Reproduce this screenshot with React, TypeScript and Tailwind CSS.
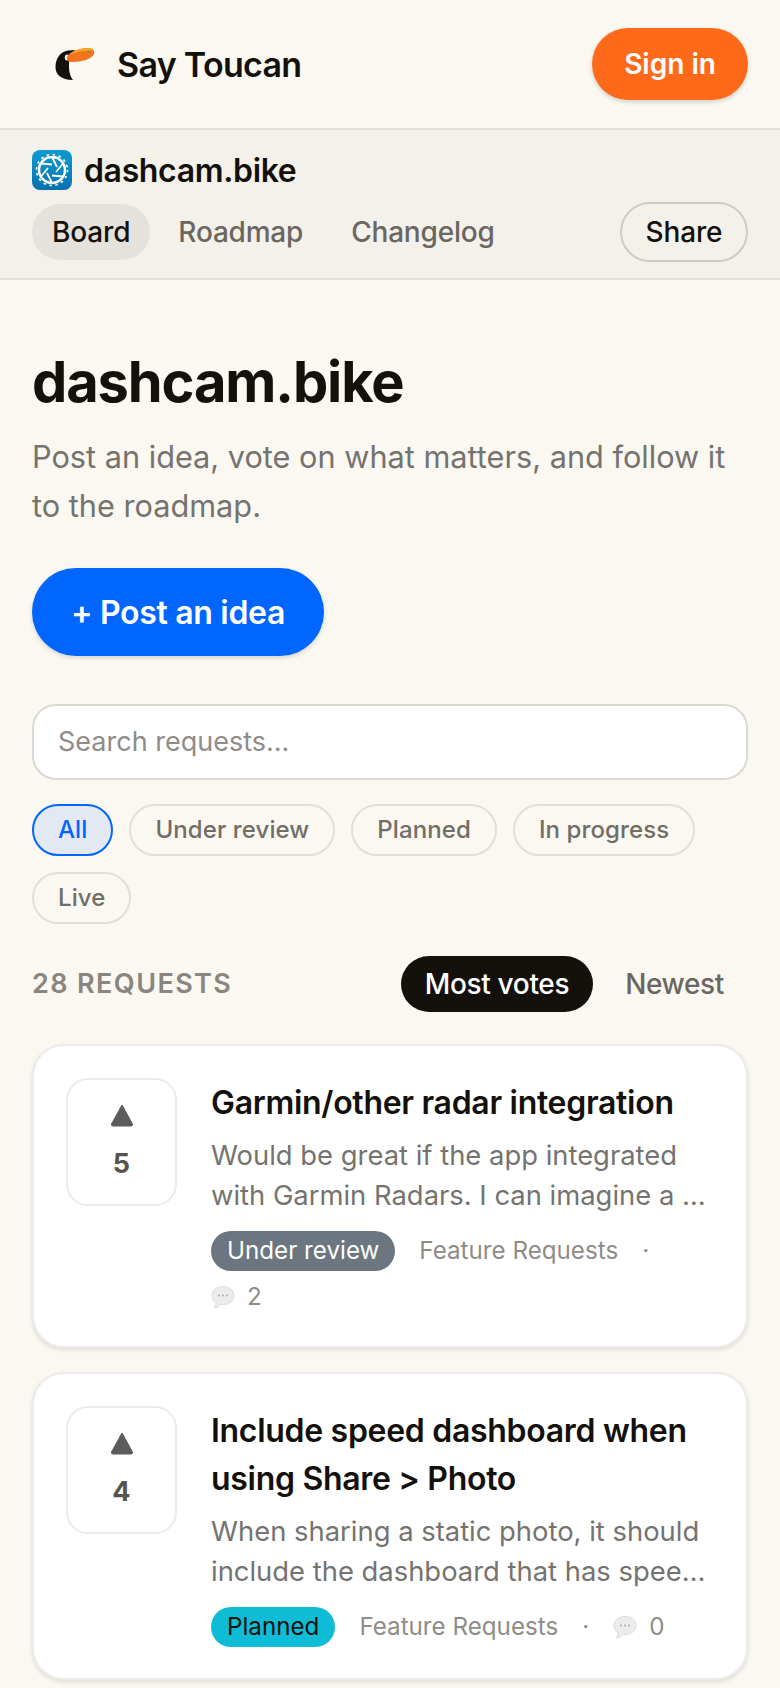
const FILTERS = [
  { label: "All", active: true },
  { label: "Under review" },
  { label: "Planned" },
  { label: "In progress" },
  { label: "Live" },
]

function ToucanLogo() {
  return (
    <svg width="40" height="33" viewBox="0 0 40 33" className="shrink-0">
      <path d="M13 2.500 C5 3.500 0.500 11 0.500 19 C0.500 26.500 6 32 18 32 C15.500 29 14 24 14 19 C14 15 14 12 15.500 9 L20 2 Z" fill="#14110d" />
      <ellipse cx="12" cy="9.500" rx="2.200" ry="3" fill="#ffffff" />
      <path d="M12 9 C14 4 24 0 33 0 C38 0 40 3 39 6 C37 11 26 14 18 14 C13 14 11 12 12 9 Z" fill="#f4731c" />
      <path d="M14.500 6 C19 2.500 26 0 33 0 C35.500 0 37.500 1 38.500 2.500 C30 2.500 22 3.500 14.500 6 Z" fill="#f9a825" />
      <path d="M30 3 L36 2.800 L35 5 Z" fill="#7a9a2e" />
    </svg>
  )
}

function ProjectLogo() {
  return (
    <div className="w-10 h-10 rounded-lg bg-gradient-to-b from-[#0d9bd0] to-[#0a72ad] flex items-center justify-center shrink-0">
      <svg width="36" height="36" viewBox="0 0 36 36" fill="none" stroke="#ffffff">
        <circle cx="18" cy="18" r="15.500" strokeWidth="1.600" strokeDasharray="2.500 3.600" />
        <circle cx="18" cy="18" r="13" strokeWidth="2.500" />
        <g strokeWidth="1.800">
          <path d="M18 5 L23 15" />
          <path d="M29 11.500 L22 20" />
          <path d="M29 24.500 L18 23.500" />
          <path d="M18 31 L13 21" />
          <path d="M7 24.500 L14 16" />
          <path d="M7 11.500 L18 12.500" />
        </g>
      </svg>
    </div>
  )
}

function CommentIcon() {
  return (
    <svg width="24" height="24" viewBox="0 0 24 24" className="shrink-0">
      <path d="M12 1.500 C5.500 1.500 1 5.500 1 10.500 C1 13.500 2.600 16 5 17.600 C5 19.500 4.200 21.500 3 23 C6 22.800 8.500 21.500 10 19.500 C10.700 19.600 11.300 19.600 12 19.600 C18.500 19.600 23 15.500 23 10.500 C23 5.500 18.500 1.500 12 1.500 Z" fill="#ececea" stroke="#dcdcda" strokeWidth="1" />
      <circle cx="8" cy="10.500" r="0.900" fill="#a3a3a0" />
      <circle cx="12" cy="10.500" r="0.900" fill="#a3a3a0" />
      <circle cx="16" cy="10.500" r="0.900" fill="#a3a3a0" />
    </svg>
  )
}

function VoteBox({ count }: { count: number }) {
  return (
    <div className="w-[111px] h-[128px] shrink-0 rounded-[22px] border-2 border-[#ebebe9] bg-white flex flex-col items-center justify-center">
      <svg width="24" height="24" viewBox="0 0 24 24" className="mb-5">
        <path d="M12 2 L22.500 21 Q23 23 21 23 L3 23 Q1 23 1.500 21 Z" fill="#5c5c5a" stroke="#5c5c5a" strokeLinejoin="round" />
      </svg>
      <span className="text-[27px] leading-[34px] font-bold text-[#57534e]">{count}</span>
    </div>
  )
}

function RequestCard({ votes, title, body, status, statusClass, comments }: {
  votes: number
  title: string
  body: string
  status: string
  statusClass: string
  comments: number
}) {
  return (
    <div className="rounded-[32px] border-2 border-[#ebebe9] bg-white shadow-[0_2px_4px_rgba(20,17,13,0.12)] px-8 pt-8 pb-[31px] flex gap-[34px]">
      <VoteBox count={votes} />
      <div className="flex-1 min-w-0 pt-[1px]">
        <h3 className="text-[32px] leading-[48px] font-semibold text-[#14110d] tracking-[-0.3px]">{title}</h3>
        <p className="mt-2 text-[27.4px] leading-[40px] text-[#75736f]">{body}</p>
        <div className="mt-4 flex flex-wrap items-center gap-y-2 text-[24.2px] leading-[36px] text-[#8f8c88]">
          <span className={`rounded-full px-4 h-10 flex items-center ${statusClass}`}>{status}</span>
          <span className="ml-6">Feature Requests</span>
          <span className="mx-6">·</span>
          <span className="flex items-center gap-3">
            <CommentIcon />
            {comments}
          </span>
        </div>
      </div>
    </div>
  )
}

export default function App() {
  return (
    <div className="w-[780px] h-[1688px] overflow-hidden bg-[#fbf8f1] font-['Inter',sans-serif]">
      <header className="h-[130px] border-b-2 border-[#e2dfd8] flex items-center justify-between pl-[55px] pr-8">
        <div className="flex items-center gap-[22px]">
          <ToucanLogo />
          <span className="text-[34px] font-semibold text-[#14110d] tracking-[-0.7px]">Say Toucan</span>
        </div>
        <button className="w-[156px] h-[72px] rounded-full bg-[#ff6a1a] text-white text-[28px] font-semibold shadow-[0_2px_4px_rgba(20,17,13,0.18)]">Sign in</button>
      </header>

      <div className="h-[150px] bg-[#f4f1ea] border-b-2 border-[#e2dfd8] px-8 pt-5">
        <div className="h-10 flex items-center gap-3">
          <ProjectLogo />
          <span className="pt-[2px] text-[32px] leading-[40px] font-semibold text-[#14110d] tracking-[-0.35px]">dashcam.bike</span>
        </div>
        <div className="mt-3 flex items-center">
          <span className="h-14 px-5 rounded-full bg-[#e5e2dc] flex items-center text-[28px] font-medium text-[#14110d] tracking-[-0.15px]">Board</span>
          <span className="ml-2 h-14 px-5 flex items-center text-[28px] font-medium text-[#6b6660] tracking-[-0.2px]">Roadmap</span>
          <span className="ml-2 h-14 px-5 flex items-center text-[28px] font-medium text-[#6b6660] tracking-[-0.2px]">Changelog</span>
          <button className="ml-auto w-[128px] h-[60px] rounded-full border-2 border-[#cfccc5] text-[28px] font-medium text-[#14110d] tracking-[-0.15px]">Share</button>
        </div>
      </div>

      <main className="px-8">
        <h1 className="mt-[62px] text-[56px] leading-[80px] font-bold text-[#14110d] tracking-[-1.12px]">dashcam.bike</h1>
        <p className="mt-[10px] text-[30.7px] leading-[49px] text-[#75736f]">Post an idea, vote on what matters, and follow it to the roadmap.</p>
        <button className="mt-[38px] w-[292px] h-[88px] pt-[2px] rounded-full bg-[#0066ff] text-white text-[32px] font-semibold tracking-[-0.3px] shadow-[0_2px_4px_rgba(20,17,13,0.15)]">+ Post an idea</button>

        <div className="mt-[48px] h-[76px] rounded-[24px] border-2 border-[#dcd9d2] bg-white px-6 pt-[1px] flex items-center text-[27px] text-[#8f8c88]">Search requests...</div>

        <div className="mt-6 flex flex-wrap gap-x-4 gap-y-4">
          {FILTERS.map((f) => (
            <span
              key={f.label}
              className={f.active
                ? "h-[52px] px-6 rounded-full border-2 border-[#0066ff] bg-[#e3e9f3] flex items-center text-[24px] font-medium text-[#0066ff] tracking-[0.1px]"
                : "h-[52px] px-6 rounded-full border-2 border-[#e2dfd8] flex items-center text-[24px] font-medium text-[#716d67] tracking-[0.1px]"}
            >
              {f.label}
            </span>
          ))}
        </div>

        <div className="mt-8 flex items-center justify-between">
          <span className="pt-[1px] text-[27px] font-semibold tracking-[1.4px] text-[#8a857e]">28 REQUESTS</span>
          <div className="flex items-center">
            <span className="h-14 px-6 rounded-full bg-[#14110d] flex items-center text-[28px] font-medium text-white tracking-[-0.35px]">Most votes</span>
            <span className="ml-2 h-14 px-6 flex items-center text-[28px] font-medium text-[#6b6660] tracking-[-0.35px]">Newest</span>
          </div>
        </div>

        <div className="mt-8 flex flex-col gap-6">
          <RequestCard
            votes={5}
            title="Garmin/other radar integration"
            body="Would be great if the app integrated with Garmin Radars. I can imagine a …"
            status="Under review"
            statusClass="bg-[#6b7680] text-white"
            comments={2}
          />
          <RequestCard
            votes={4}
            title="Include speed dashboard when using Share > Photo"
            body="When sharing a static photo, it should include the dashboard that has spee…"
            status="Planned"
            statusClass="bg-[#0fbcd6] text-[#14110d]"
            comments={0}
          />
        </div>
      </main>
    </div>
  )
}
